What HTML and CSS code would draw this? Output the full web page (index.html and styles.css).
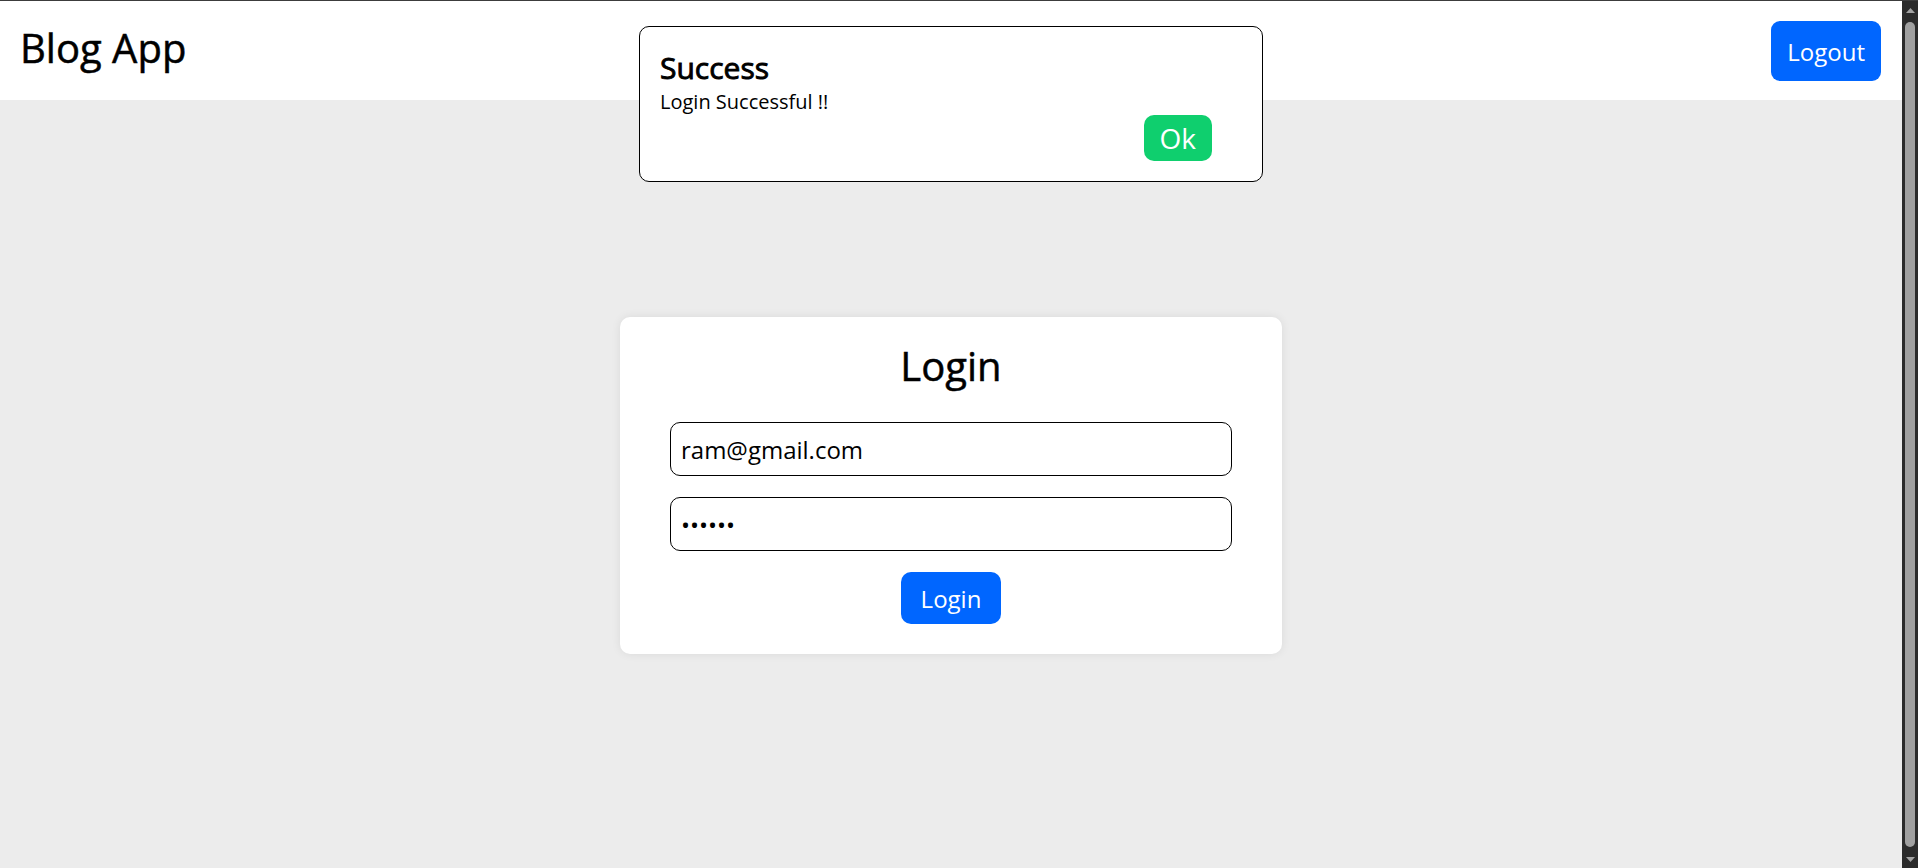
FILE: index.html
```html
<!DOCTYPE html>
<html lang="en">
<head>
<meta charset="utf-8">
<title>Blog App</title>
<link rel="stylesheet" href="styles.css">
</head>
<body>
<div class="viewport">
  <header class="topbar">
    <h1 class="brand">Blog App</h1>
    <button class="btn btn-primary btn-logout" type="button">Logout</button>
  </header>
  <main class="page">
    <form class="card">
      <h2 class="card-title">Login</h2>
      <input class="field" type="email" value="ram@gmail.com">
      <input class="field" type="password" value="123456">
      <button class="btn btn-primary btn-login" type="button">Login</button>
    </form>
  </main>
  <div class="alert">
    <h3 class="alert-title">Success</h3>
    <p class="alert-text">Login Successful !!</p>
    <div class="alert-actions">
      <button class="btn btn-ok" type="button">Ok</button>
    </div>
  </div>
</div>
<div class="scrollbar" aria-hidden="true">
  <div class="sb-arrow">
    <svg width="9" height="5" viewBox="0 0 9 5"><path d="M4.5 0 L9 5 L0 5 Z" fill="#a3a3a3"/></svg>
  </div>
  <div class="sb-thumb"></div>
  <div class="sb-arrow">
    <svg width="9" height="5" viewBox="0 0 9 5"><path d="M0 0 L9 0 L4.5 5 Z" fill="#a3a3a3"/></svg>
  </div>
</div>
</body>
</html>
```
FILE: styles.css
```css
html, body {
  margin: 0;
  padding: 0;
}

body {
  font-family: "Open Sans", "Noto Sans", sans-serif;
  background: #ececec;
  color: #000;
  height: 100vh;
  box-sizing: border-box;
  border-top: 1px solid #3c3c3c;
  display: flex;
  overflow: hidden;
}

.viewport {
  flex: 1;
  position: relative;
  display: flex;
  flex-direction: column;
  min-width: 0;
}

.scrollbar {
  width: 16px;
  flex: none;
  background: #2b2b2b;
  display: flex;
  flex-direction: column;
  align-items: center;
}

.sb-arrow {
  height: 18px;
  width: 100%;
  display: flex;
  align-items: center;
  justify-content: center;
}

.sb-thumb {
  flex: 1;
  width: 10px;
  margin: 3px 0;
  background: #a0a0a0;
  border-radius: 5px;
}

.topbar {
  box-sizing: border-box;
  height: 99px;
  flex: none;
  background: #fff;
  display: flex;
  justify-content: space-between;
  align-items: flex-start;
  padding: 19px 21px 0 20px;
}

.brand {
  margin: 0;
  font-size: 40px;
  font-weight: 400;
  line-height: normal;
  -webkit-text-stroke: 0.5px #000;
}

.btn {
  font-family: "Open Sans", "Noto Sans", sans-serif;
  border: none;
  color: #fff;
  cursor: pointer;
}

.btn-primary {
  background: #0066ff;
}

.btn-logout {
  margin-top: 1px;
  height: 60px;
  padding: 0 16px;
  font-size: 24px;
  border-radius: 9px;
}

.page {
  flex: 1;
  padding-top: 3px;
  display: flex;
  align-items: center;
  justify-content: center;
}

.card {
  box-sizing: border-box;
  width: 662px;
  background: #fff;
  border-radius: 10px;
  box-shadow: 0 0 10px rgba(0, 0, 0, 0.08);
  padding: 21px 50px 30px;
  display: flex;
  flex-direction: column;
}

.card-title {
  margin: 0 0 29px;
  text-align: center;
  font-size: 40px;
  font-weight: 400;
  line-height: normal;
  -webkit-text-stroke: 0.5px #000;
}

.field {
  box-sizing: border-box;
  width: 100%;
  height: 54px;
  margin: 0 0 21px;
  padding: 0 10px;
  border: 1px solid #000;
  border-radius: 10px;
  background: #fff;
  font-family: "Open Sans", "Noto Sans", sans-serif;
  font-size: 24px;
  color: #000;
  outline: none;
}

.btn-login {
  align-self: center;
  height: 52px;
  padding: 0 20px;
  font-size: 24px;
  border-radius: 10px;
}

.alert {
  position: absolute;
  top: 25px;
  left: 50%;
  transform: translateX(-50%);
  box-sizing: border-box;
  width: 624px;
  background: #fff;
  border: 1px solid #000;
  border-radius: 10px;
  padding: 20px;
}

.alert-title {
  margin: 0;
  font-size: 30px;
  font-weight: 400;
  line-height: normal;
  -webkit-text-stroke: 0.9px #000;
}

.alert-text {
  margin: 0;
  font-size: 20px;
  line-height: normal;
}

.alert-actions {
  display: flex;
  justify-content: flex-end;
  padding-right: 30px;
}

.btn-ok {
  height: 46px;
  padding: 0 16px;
  font-size: 28px;
  border-radius: 10px;
  background: #0fcf6e;
}
```
